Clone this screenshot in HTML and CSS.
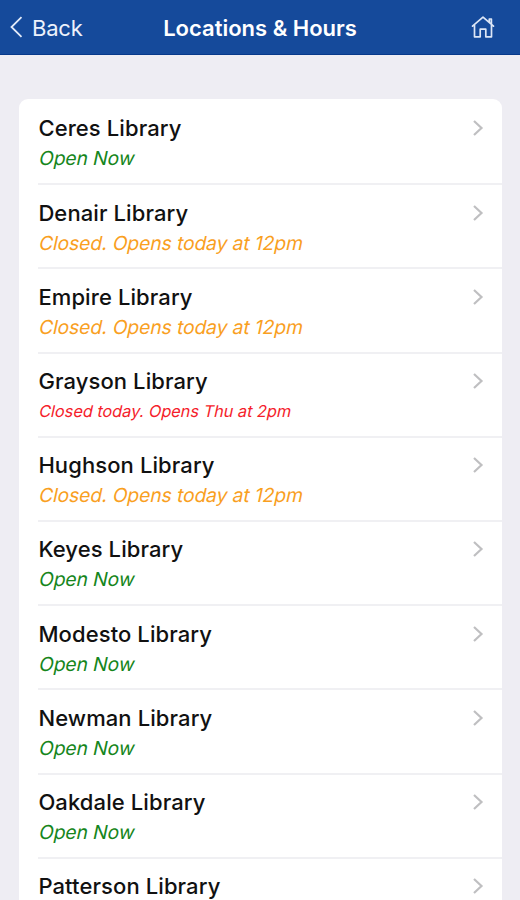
FILE: index.html
```html
<!DOCTYPE html>
<html lang="en">
<head>
<meta charset="utf-8">
<title>Locations &amp; Hours</title>
<link rel="stylesheet" href="styles.css">
</head>
<body>
<header class="navbar">
  <a class="back"><svg class="back-icon" width="14" height="24" viewBox="0 0 14 24"><path d="M12.5 2.2L2.5 12L12.5 21.8"/></svg><span>Back</span></a>
  <h1 class="title">Locations &amp; Hours</h1>
  <a class="home"><svg width="26" height="24" viewBox="0 0 26 24"><path d="M2.5 11.2L13 2.2L23.5 11.2M19.3 7V4H21.4V8.8M4.5 9.8V21.8H10.2V14.2H15.8V21.8H21.5V9.8"/></svg></a>
</header>
<main class="content">
  <ul class="list">
    <li class="row"><div class="info"><div class="name">Ceres Library</div><div class="status open">Open Now</div></div><svg class="chevron" width="12" height="18" viewBox="0 0 12 18"><path d="M2 2L9.5 9L2 16"/></svg></li>
    <li class="row"><div class="info"><div class="name">Denair Library</div><div class="status later">Closed. Opens today at 12pm</div></div><svg class="chevron" width="12" height="18" viewBox="0 0 12 18"><path d="M2 2L9.5 9L2 16"/></svg></li>
    <li class="row"><div class="info"><div class="name">Empire Library</div><div class="status later">Closed. Opens today at 12pm</div></div><svg class="chevron" width="12" height="18" viewBox="0 0 12 18"><path d="M2 2L9.5 9L2 16"/></svg></li>
    <li class="row"><div class="info"><div class="name">Grayson Library</div><div class="status closed">Closed today. Opens Thu at 2pm</div></div><svg class="chevron" width="12" height="18" viewBox="0 0 12 18"><path d="M2 2L9.5 9L2 16"/></svg></li>
    <li class="row"><div class="info"><div class="name">Hughson Library</div><div class="status later">Closed. Opens today at 12pm</div></div><svg class="chevron" width="12" height="18" viewBox="0 0 12 18"><path d="M2 2L9.5 9L2 16"/></svg></li>
    <li class="row"><div class="info"><div class="name">Keyes Library</div><div class="status open">Open Now</div></div><svg class="chevron" width="12" height="18" viewBox="0 0 12 18"><path d="M2 2L9.5 9L2 16"/></svg></li>
    <li class="row"><div class="info"><div class="name">Modesto Library</div><div class="status open">Open Now</div></div><svg class="chevron" width="12" height="18" viewBox="0 0 12 18"><path d="M2 2L9.5 9L2 16"/></svg></li>
    <li class="row"><div class="info"><div class="name">Newman Library</div><div class="status open">Open Now</div></div><svg class="chevron" width="12" height="18" viewBox="0 0 12 18"><path d="M2 2L9.5 9L2 16"/></svg></li>
    <li class="row"><div class="info"><div class="name">Oakdale Library</div><div class="status open">Open Now</div></div><svg class="chevron" width="12" height="18" viewBox="0 0 12 18"><path d="M2 2L9.5 9L2 16"/></svg></li>
    <li class="row"><div class="info"><div class="name">Patterson Library</div></div><svg class="chevron" width="12" height="18" viewBox="0 0 12 18"><path d="M2 2L9.5 9L2 16"/></svg></li>
  </ul>
</main>
</body>
</html>
```
FILE: styles.css
```css
* { box-sizing: border-box; }
body {
  margin: 0;
  height: 900px;
  overflow: hidden;
  background: #eeedf3;
  font-family: Inter, "Liberation Sans", sans-serif;
}
svg { display: block; fill: none; }
.navbar {
  display: grid;
  grid-template-columns: 110px 1fr 110px;
  align-items: center;
  height: 55px;
  background: #154a9b;
  border-bottom: 1px solid #07398a;
  color: #fff;
}
.back {
  display: flex;
  align-items: center;
  gap: 9px;
  padding-left: 9px;
  font-size: 22px;
  line-height: 28px;
  letter-spacing: -0.2px;
  color: #edf2fb;
}
.back span { padding-top: 2px; }
.back-icon { stroke: #e3ebf8; stroke-width: 1.8; }
.title {
  margin: 2px 0 0;
  text-align: center;
  white-space: nowrap;
  font-size: 22px;
  line-height: 28px;
  font-weight: 600;
}
.home { justify-self: end; padding-right: 24px; }
.home svg { stroke: #dce6f6; stroke-width: 1.7; stroke-linejoin: round; stroke-linecap: round; }
.content { padding: 44px 18px 0 19px; }
.list {
  margin: 0;
  padding: 2px 0 0 19px;
  list-style: none;
  background: #fff;
  border-radius: 9px;
}
.row {
  display: flex;
  justify-content: space-between;
  align-items: flex-start;
  height: 84.2px;
  padding: 13.4px 18px 0 0;
  border-bottom: 2px solid #f0f0f3;
}
.name {
  padding-left: 0.4px;
  font-size: 22px;
  line-height: 28px;
  font-weight: 500;
  letter-spacing: 0.1px;
  color: #111;
}
/* Slanted upright letterforms instead of the cursive italic face */
.status {
  width: max-content;
  margin-top: 2px;
  font-size: 19.3px;
  line-height: 28px;
  letter-spacing: -0.1px;
  white-space: nowrap;
  transform: skewX(-12deg);
  transform-origin: 0 75%;
}
.open { color: #16861c; }
.later { color: #f9a01f; }
.closed { color: #f51d2b; font-size: 16.3px; letter-spacing: 0; }
.chevron { margin-top: 5px; stroke: #bfbfc1; stroke-width: 2.2; }
```
